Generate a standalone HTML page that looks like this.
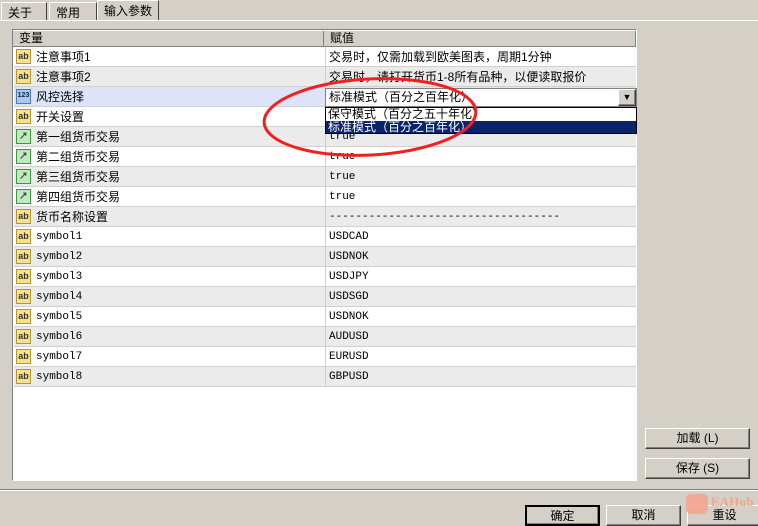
<!DOCTYPE html><html><head><meta charset="utf-8"><style>
*{margin:0;padding:0;box-sizing:border-box}
body{width:758px;height:519px;background:#d4d0c8;font-family:"Liberation Sans","Noto Sans CJK SC",sans-serif;font-size:12px;position:relative;overflow:hidden;color:#000}
.abs{position:absolute}
.tab{position:absolute;top:2px;height:18px;border:1px solid #fff;border-right:1px solid #404040;border-bottom:none;padding:1px 6px;font-size:12px}
.grid{position:absolute;left:12px;top:29px;width:625px;height:452px;background:#fff;border:1px solid #808080;border-right-color:#fff;border-bottom-color:#fff}
.hdr{position:absolute;top:1px;height:16px;background:#d4d0c8;border-right:1px solid #808080;border-bottom:1px solid #808080;padding-left:6px;line-height:15px}
.row{position:absolute;left:1px;width:622px;height:20px;border-bottom:1px solid #d4d0c8}
.row .n{position:absolute;left:22px;top:3px;line-height:14px}
.row .v{position:absolute;left:315px;top:3px;line-height:14px;font-family:"Liberation Mono","Noto Sans CJK SC",monospace;font-size:11px}
.row .c{position:absolute;left:311px;top:0;height:19px;border-left:1px solid #d4d0c8}
.ic{position:absolute;left:2px;top:2px;width:15px;height:15px;border:1px solid #b59a2a;background:#f4e38a;font-size:9px;line-height:12px;text-align:center;font-weight:bold;color:#333}
.ic.b{background:#a8c8ee;border-color:#4a7ab8;font-size:7px;color:#123}
.ic.g{background:#bfeabf;border-color:#3a9a3a}
.btn{position:absolute;height:21px;background:#d4d0c8;border:1px solid #fff;border-right-color:#404040;border-bottom-color:#404040;text-align:center;line-height:19px;font-size:12px;box-shadow:inset -1px -1px 0 #808080}
</style></head><body>
<div class="tab" style="left:1px;width:46px">关于</div>
<div class="tab" style="left:49px;width:48px">常用</div>
<div class="tab" style="left:97px;top:0;height:21px;width:62px;background:#d4d0c8">输入参数</div>
<div class="abs" style="left:0;top:20px;width:758px;height:1px;background:#fff"></div>
<div class="grid">
<div class="hdr" style="left:0;width:311px">变量</div>
<div class="hdr" style="left:311px;width:312px">赋值</div>
<div class="row" style="top:17px;background:#fff"><div class="ic">ab</div><div class="n">注意事项1</div><div class="c"></div><div class="v" style="font-family:'Liberation Sans','Noto Sans CJK SC',sans-serif;font-size:12px">交易时，仅需加载到欧美图表，周期1分钟</div></div>
<div class="row" style="top:37px;background:#ebebeb"><div class="ic">ab</div><div class="n">注意事项2</div><div class="c"></div><div class="v" style="font-family:'Liberation Sans','Noto Sans CJK SC',sans-serif;font-size:12px">交易时，请打开货币1-8所有品种，以便读取报价</div></div>
<div class="row" style="top:57px;background:#dde4f8"><div class="ic b">123</div><div class="n">风控选择</div><div class="c"></div></div>
<div class="row" style="top:77px;background:#fff"><div class="ic">ab</div><div class="n">开关设置</div><div class="c"></div></div>
<div class="row" style="top:97px;background:#ebebeb"><div class="ic g">↗</div><div class="n">第一组货币交易</div><div class="c"></div><div class="v">true</div></div>
<div class="row" style="top:117px;background:#fff"><div class="ic g">↗</div><div class="n">第二组货币交易</div><div class="c"></div><div class="v">true</div></div>
<div class="row" style="top:137px;background:#ebebeb"><div class="ic g">↗</div><div class="n">第三组货币交易</div><div class="c"></div><div class="v">true</div></div>
<div class="row" style="top:157px;background:#fff"><div class="ic g">↗</div><div class="n">第四组货币交易</div><div class="c"></div><div class="v">true</div></div>
<div class="row" style="top:177px;background:#ebebeb"><div class="ic">ab</div><div class="n">货币名称设置</div><div class="c"></div><div class="v">-----------------------------------</div></div>
<div class="row" style="top:197px;background:#fff"><div class="ic">ab</div><div class="n v" style="left:22px">symbol1</div><div class="c"></div><div class="v">USDCAD</div></div>
<div class="row" style="top:217px;background:#ebebeb"><div class="ic">ab</div><div class="n v" style="left:22px">symbol2</div><div class="c"></div><div class="v">USDNOK</div></div>
<div class="row" style="top:237px;background:#fff"><div class="ic">ab</div><div class="n v" style="left:22px">symbol3</div><div class="c"></div><div class="v">USDJPY</div></div>
<div class="row" style="top:257px;background:#ebebeb"><div class="ic">ab</div><div class="n v" style="left:22px">symbol4</div><div class="c"></div><div class="v">USDSGD</div></div>
<div class="row" style="top:277px;background:#fff"><div class="ic">ab</div><div class="n v" style="left:22px">symbol5</div><div class="c"></div><div class="v">USDNOK</div></div>
<div class="row" style="top:297px;background:#ebebeb"><div class="ic">ab</div><div class="n v" style="left:22px">symbol6</div><div class="c"></div><div class="v">AUDUSD</div></div>
<div class="row" style="top:317px;background:#fff"><div class="ic">ab</div><div class="n v" style="left:22px">symbol7</div><div class="c"></div><div class="v">EURUSD</div></div>
<div class="row" style="top:337px;background:#ebebeb"><div class="ic">ab</div><div class="n v" style="left:22px">symbol8</div><div class="c"></div><div class="v">GBPUSD</div></div>
</div>
<!-- combo -->
<div class="abs" style="left:325px;top:88px;width:312px;height:19px;background:#fff;border:1px solid #808080;padding-left:3px;line-height:17px">标准模式（百分之百年化）</div>
<div class="btn" style="left:618px;top:89px;width:18px;height:17px;line-height:15px;font-size:9px">▼</div>
<div class="abs" style="left:325px;top:107px;width:312px;height:27px;background:#fff;border:1px solid #000">
<div style="height:13px;line-height:13px;padding-left:2px">保守模式（百分之五十年化）</div>
<div style="height:12px;line-height:12px;padding-left:2px;background:#0a246a;color:#fff">标准模式（百分之百年化）</div></div>
<svg class="abs" style="left:0;top:0" width="758" height="519"><ellipse cx="370" cy="117" rx="106" ry="38" transform="rotate(-3 370 117)" fill="none" stroke="#f02020" stroke-width="3"/></svg>
<div class="btn" style="left:645px;top:428px;width:105px">加载 (L)</div>
<div class="btn" style="left:645px;top:458px;width:105px">保存 (S)</div>
<div class="abs" style="left:0;top:489px;width:758px;height:1px;background:#808080"></div>
<div class="abs" style="left:0;top:490px;width:758px;height:1px;background:#fff"></div>
<div class="btn" style="left:525px;top:505px;width:75px;border:2px solid #000">确定</div>
<div class="btn" style="left:606px;top:505px;width:75px">取消</div>
<div class="btn" style="left:687px;top:505px;width:75px">重设</div>
<div class="abs" style="left:686px;top:494px;width:22px;height:20px;background:#f4a38c;border-radius:5px;opacity:.85"></div>
<div class="abs" style="left:711px;top:494px;color:#f4a38c;font-weight:bold;font-size:13px;font-family:'Liberation Serif',serif">EAHub</div>
</body></html>
